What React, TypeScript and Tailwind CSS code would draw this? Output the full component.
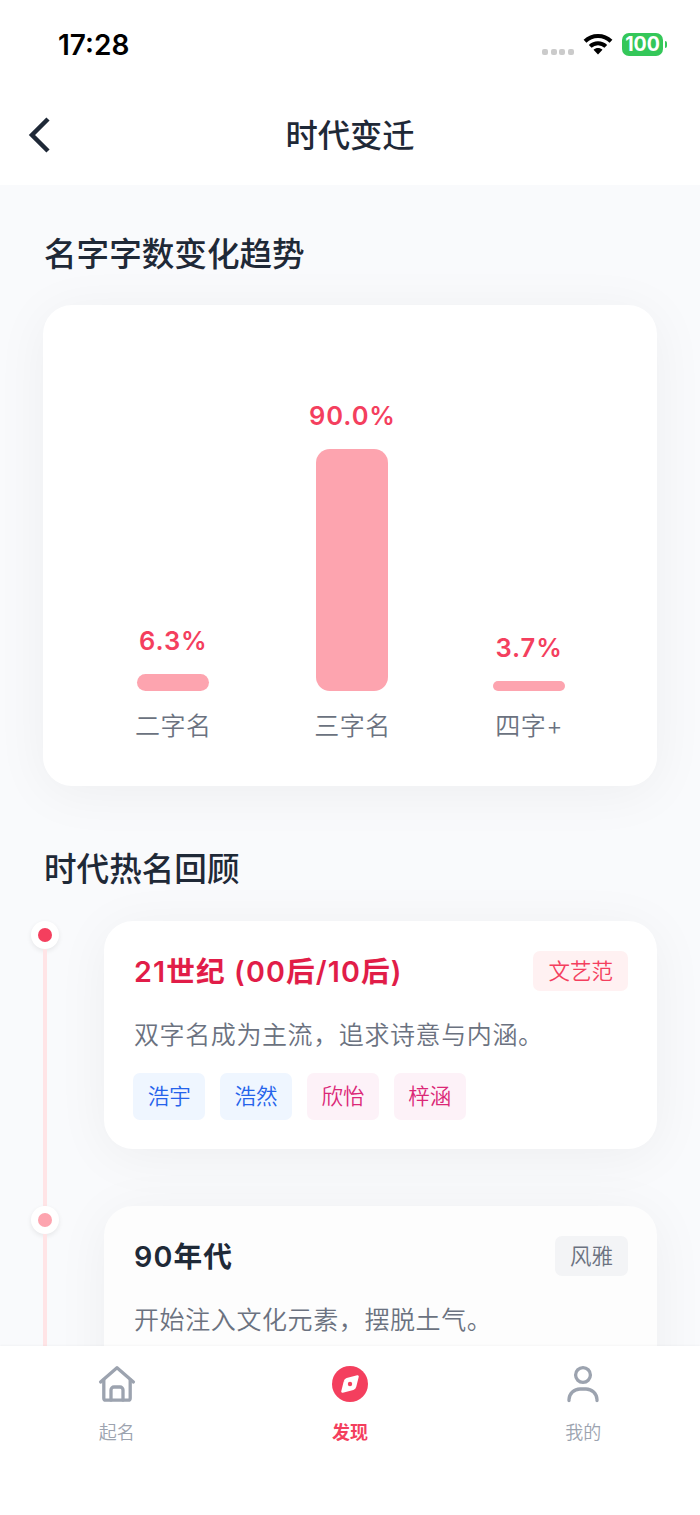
const bars = [
  { label: "二字名", value: "6.3%", col: "w-[76px]", height: "h-[17px]", radius: "rounded-full" },
  { label: "三字名", value: "90.0%", col: "w-[85px]", height: "h-[242px]", radius: "rounded-[14px]" },
  { label: "四字+", value: "3.7%", col: "w-[71px]", height: "h-[10px]", radius: "rounded-full" },
];

function StatusBar() {
  return (
    <div className="flex h-[88px] items-center justify-between pl-[58px] pr-[33px]">
      <span className="mt-[2px] text-[28px] font-semibold leading-none text-black">17:28</span>
      <div className="flex items-center">
        <div className="mr-[9px] mt-[15px] flex gap-[2.7px]">
          {[0, 1, 2, 3].map((i) => (
            <span key={i} className="size-[6px] rounded-[2px] bg-[#cbcbcb]" />
          ))}
        </div>
        <svg width="30" height="22" viewBox="0 0 30 22" fill="none" stroke="#000" strokeWidth="4">
          <path d="M2 8.2C9.2 1.2 20.8 1.2 28 8.2" />
          <path d="M7.2 13.4c4.4-4.2 11.2-4.2 15.6 0" />
          <path d="M10.5 16.8c2.6-2.3 6.4-2.3 9 0L15 21.5z" fill="#000" stroke="none" />
        </svg>
        <div className="ml-[9px] flex h-[23px] w-[41px] items-center justify-center rounded-[7px] bg-[#34c759] pt-px text-[19.5px] font-bold leading-none text-white">
          100
        </div>
        <span className="ml-[1.5px] h-[7px] w-[2.5px] rounded-r-full bg-[#34c759]" />
      </div>
    </div>
  );
}

function Header() {
  return (
    <header className="h-[185px] shrink-0 bg-white">
      <StatusBar />
      <div className="grid h-[93px] grid-cols-3 items-center px-[28px]">
        <svg width="24" height="36" viewBox="0 0 24 36" fill="none" stroke="#1f2937" strokeWidth="4.5">
          <path d="M20 2 4 18l16 16" />
        </svg>
        <h1 className="pt-[4px] text-center text-[32.3px] font-medium text-[#1f2937]">时代变迁</h1>
      </div>
    </header>
  );
}

function TrendChart() {
  return (
    <div className="flex h-[481px] items-end justify-around rounded-[29px] bg-white px-[43px] pb-[42px] shadow-[0_7px_54px_rgba(0,0,0,0.05)]">
      {bars.map((bar) => (
        <div key={bar.label} className={`flex flex-col items-center whitespace-nowrap ${bar.col}`}>
          <span className="mb-[15px] text-[25.5px] font-semibold leading-[36px] tracking-[0.9px] text-[#f43f5e]">
            {bar.value}
          </span>
          <div className={`w-[72px] bg-[#fda4af] ${bar.height} ${bar.radius}`} />
          <span className="mt-[17px] text-[25px] font-[350] leading-[36px] tracking-[0.5px] text-[#6b7280]">
            {bar.label}
          </span>
        </div>
      ))}
    </div>
  );
}

type Era = {
  title: string;
  desc: string;
  style: string;
  names: { text: string; tone: string }[];
  active?: boolean;
};

const eras: Era[] = [
  {
    title: "21世纪 (00后/10后)",
    desc: "双字名成为主流，追求诗意与内涵。",
    style: "文艺范",
    names: [
      { text: "浩宇", tone: "bg-[#eff6ff] text-[#2563eb]" },
      { text: "浩然", tone: "bg-[#eff6ff] text-[#2563eb]" },
      { text: "欣怡", tone: "bg-[#fdf2f8] text-[#db2777]" },
      { text: "梓涵", tone: "bg-[#fdf2f8] text-[#db2777]" },
    ],
    active: true,
  },
  { title: "90年代", desc: "开始注入文化元素，摆脱土气。", style: "风雅", names: [] },
];

function EraItem({ era }: { era: Era }) {
  return (
    <li className="flex items-stretch">
      <div className="-ml-[12px] mr-[45px] flex w-[28px] shrink-0 flex-col items-center">
        <div className="flex size-[28px] shrink-0 items-center justify-center rounded-full bg-white shadow-[0_2px_5px_rgba(0,0,0,0.08)]">
          <span className={`size-[14px] rounded-full ${era.active ? "bg-[#f43f5e]" : "bg-[#fda4af]"}`} />
        </div>
        <div className="w-[4px] flex-1 bg-[#ffe4e6]" />
      </div>
      <div className="flex-1 pb-[57px]">
        <div
          className={`h-[228px] rounded-[29px] px-[29px] pt-[30px] shadow-[0_7px_54px_rgba(0,0,0,0.05)] ${
            era.active ? "bg-white" : "bg-[#fdfdfd]"
          }`}
        >
          <div className="flex items-center justify-between">
            <h3
              className={`pl-px pt-[2px] text-[28.7px] font-semibold leading-[38px] tracking-[1.1px] ${
                era.active ? "text-[#e11d48]" : "text-[#1f2937]"
              }`}
            >
              {era.title}
            </h3>
            <span
              className={`rounded-[7px] px-[15px] text-[21.5px] font-[350] leading-[40px] ${
                era.active ? "bg-[#fff1f2] text-[#f43f5e]" : "bg-[#f3f4f6] text-[#6b7280]"
              }`}
            >
              {era.style}
            </span>
          </div>
          <p className="mt-[24px] pl-px text-[25px] font-[350] leading-[40px] tracking-[0.6px] text-[#6b7280]">
            {era.desc}
          </p>
          <div className="mt-[18px] flex gap-[14.5px]">
            {era.names.map((name) => (
              <span
                key={name.text}
                className={`rounded-[7px] px-[14.7px] text-[21.5px] font-[350] leading-[47px] ${name.tone}`}
              >
                {name.text}
              </span>
            ))}
          </div>
        </div>
      </div>
    </li>
  );
}

function TabBar() {
  return (
    <nav className="z-10 grid h-[169px] shrink-0 grid-cols-3 bg-white pt-[18px] text-[18px] text-[#9ca3af] shadow-[0_-1px_2px_rgba(0,0,0,0.03)]">
      <div className="flex flex-col items-center gap-[17px]">
        <svg width="40" height="40" viewBox="0 0 40 40" fill="none" stroke="#9ca3af" strokeWidth="3.3" strokeLinecap="round" strokeLinejoin="round">
          <path d="M3.6 18 20 3.8 36.4 18" />
          <path d="M6.800 16v18.200a2 2 0 0 0 2 2h22.400a2 2 0 0 0 2-2V16" />
          <path d="M14 36V26a3 3 0 0 1 3-3h6a3 3 0 0 1 3 3v10" />
        </svg>
        <span className="font-[350] leading-[24px]">起名</span>
      </div>
      <div className="flex flex-col items-center gap-[17px] text-[#f43f5e]">
        <svg width="40" height="40" viewBox="0 0 40 40">
          <circle cx="20" cy="20" r="18" fill="#f43f5e" />
          <path
            d="M27.500 12.500 25 22.500a3 3 0 0 1-2 2.200L12.500 27.500 15 17.500a3 3 0 0 1 2-2.200z"
            fill="#fff"
            stroke="#fff"
            strokeWidth="2.6"
            strokeLinejoin="round"
          />
          <circle cx="20" cy="20" r="2.2" fill="#f43f5e" />
        </svg>
        <span className="font-semibold leading-[24px]">发现</span>
      </div>
      <div className="flex flex-col items-center gap-[17px]">
        <svg width="40" height="40" viewBox="0 0 40 40" fill="none" stroke="#9ca3af" strokeWidth="3.3" strokeLinecap="round">
          <circle cx="20" cy="11" r="7.4" />
          <path d="M6 36.500v-1A11 11 0 0 1 17 25h6a11 11 0 0 1 11 10.500v1" />
        </svg>
        <span className="font-[350] leading-[24px]">我的</span>
      </div>
    </nav>
  );
}

export default function App() {
  return (
    <div className="flex h-[1515px] w-[700px] flex-col overflow-hidden bg-[#f9fafc] font-['Inter','Noto_Sans_CJK_SC',sans-serif]">
      <Header />
      <main className="min-h-0 flex-1 overflow-hidden px-[43px] pt-[45px]">
        <h2 className="mb-[27px] pl-px text-[32.6px] font-medium leading-[48px] text-[#1f2937]">名字字数变化趋势</h2>
        <TrendChart />
        <h2 className="mb-[28px] mt-[59px] pl-px text-[32.6px] font-medium leading-[48px] text-[#1f2937]">时代热名回顾</h2>
        <ul>
          {eras.map((era) => (
            <EraItem key={era.title} era={era} />
          ))}
        </ul>
      </main>
      <TabBar />
    </div>
  );
}
